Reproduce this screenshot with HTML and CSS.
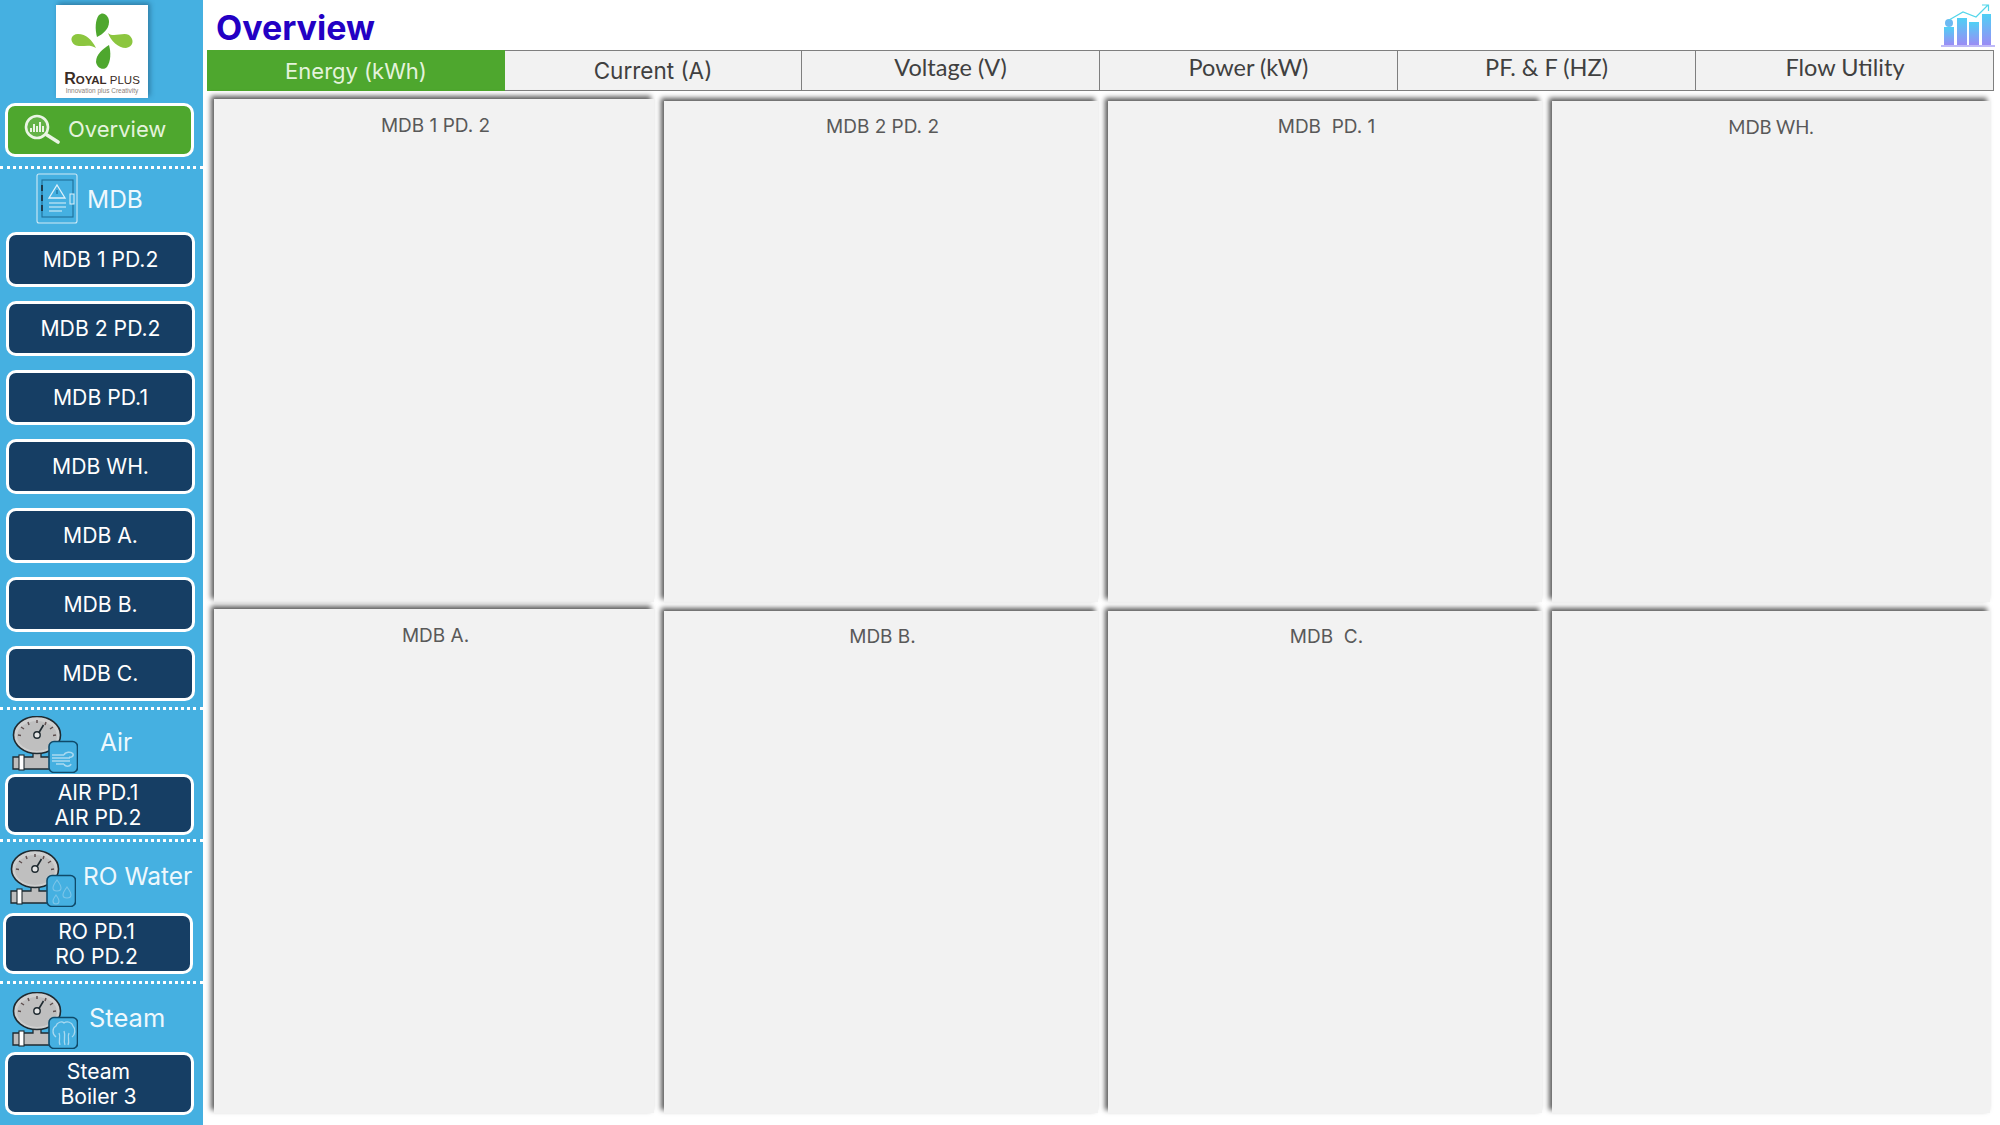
FILE: index.html
```html
<!DOCTYPE html>
<html lang="en">
<head>
<meta charset="utf-8">
<title>Overview</title>
<link rel="stylesheet" href="styles.css">
</head>
<body>
<svg class="defs" width="0" height="0" aria-hidden="true">
  <symbol id="gauge" viewBox="0 0 66 57">
    <path d="M21 35v6H1v12h40V41H29v-6z" fill="#bdbdbd" stroke="#1f2a30" stroke-width="1.300"/>
    <rect x="7" y="39" width="5" height="15" fill="#fff" stroke="#1f2a30" stroke-width="1.100"/>
    <ellipse cx="25" cy="19" rx="23.500" ry="18.500" fill="#cfcfcf" stroke="#1f2a30" stroke-width="1.600"/>
    <ellipse cx="25" cy="20" rx="20" ry="15" fill="#bfbfbf"/>
    <path d="M6 19l3 .5M9 11l3 2M16 6l1 3M25 4v3M34 6l-1 3M41 11l-3 2M44 19l-3 .5" stroke="#5f5050" stroke-width="1.500"/>
    <circle cx="25" cy="19" r="3.200" fill="#e4e4e4" stroke="#1f2a30" stroke-width="1.400"/>
    <path d="M27 16.500L31.500 9" stroke="#1f2a30" stroke-width="1.600"/>
    <rect x="37" y="25.500" width="28.500" height="31" rx="5" fill="#45b0e1" stroke="#0f4a6a" stroke-width="1.600"/>
  </symbol>
</svg>
<div class="app">
  <aside class="sidebar">
    <div class="brand">
      <div class="logo">
        <svg class="logo-mark" viewBox="66 10 70 62">
          <path d="M96 37C94 30 94 20 98 15c4-4 10 0 10 7 0 7-6 12-12 15z" fill="#4ea72e"/>
          <path d="M108 45c2 7 2 16-2 22-4 4-10 1-11-5 0-8 7-13 13-17z" fill="#4ea72e"/>
          <path d="M95 48c-7-5-15 0-21-3-6-4-4-11 3-11 8 0 14 6 18 14z" fill="#8cc63f"/>
          <path d="M107 33c5 5 15-1 21 2 6 5 4 12-3 13-8 0-15-7-18-15z" fill="#8cc63f"/>
        </svg>
        <div class="logo-name"><span class="logo-r">R</span><span class="logo-oyal">OYAL</span> PLUS</div>
        <div class="logo-tag">Innovation plus Creativity</div>
      </div>
    </div>
    <a class="btn btn-green">
      <svg class="ov-icon" viewBox="0 0 40 30">
        <circle cx="14" cy="13" r="11" fill="#63b247" stroke="#eaf5e4" stroke-width="2.600"/>
        <path d="M8 18v-4M11 18v-8M14 18v-6M17 18V8M20 18v-6" stroke="#eaf5e4" stroke-width="2"/>
        <path d="M24 21l11 7" stroke="#eaf5e4" stroke-width="3.600" stroke-linecap="round"/>
      </svg>
      Overview
    </a>
    <div class="dots dots-first"></div>
    <div class="head head-mdb">
      <svg class="mdb-icon" viewBox="0 0 42 51">
        <rect x="1" y="1" width="40" height="49" rx="2" fill="none" stroke="#cfe9f6" stroke-width="1.100"/>
        <rect x="6" y="7" width="31" height="37" fill="none" stroke="#1f6f99" stroke-width="1.100"/>
        <path d="M6 12v6M6 22v6M6 32v6" stroke="#1f3b4d" stroke-width="2"/>
        <path d="M21 12l8 13H13z" fill="none" stroke="#dff1fa" stroke-width="1.300"/>
        <path d="M21 17v4" stroke="#1f6f99" stroke-width="1.300"/>
        <path d="M13 30h17M13 34h17M13 38h13" stroke="#dff1fa" stroke-width="1.200"/>
        <rect x="34" y="21" width="4" height="10" fill="#45b0e1" stroke="#dff1fa" stroke-width="1"/>
      </svg>
      <span class="head-text">MDB</span>
    </div>
    <div class="stack">
      <a class="btn btn-navy btn-one">MDB 1 PD.2</a>
      <a class="btn btn-navy btn-one">MDB 2 PD.2</a>
      <a class="btn btn-navy btn-one">MDB PD.1</a>
      <a class="btn btn-navy btn-one">MDB WH.</a>
      <a class="btn btn-navy btn-one">MDB A.</a>
      <a class="btn btn-navy btn-one">MDB B.</a>
      <a class="btn btn-navy btn-one">MDB C.</a>
    </div>
    <div class="dots dots-air"></div>
    <div class="head head-air">
      <span class="gauge">
        <svg class="gauge-svg" viewBox="0 0 66 57"><use href="#gauge"/>
          <path d="M40 39h12M40 42h18M40 45h18M44 48h8M52 39c1-3 7-4 9-1 1 2-2 4-4 3M52 48c1 3 6 3 7 0" fill="none" stroke="#a9d9f0" stroke-width="1.500"/>
        </svg>
      </span>
      <span class="head-text head-text-air">Air</span>
    </div>
    <a class="btn btn-navy btn-two">AIR PD.1<br>AIR PD.2</a>
    <div class="dots dots-small"></div>
    <div class="head head-ro">
      <span class="gauge">
        <svg class="gauge-svg" viewBox="0 0 66 57"><use href="#gauge"/>
          <path d="M47 30c-3 4-4 6-4 8s2 3 4 3 4-1 4-3-1-4-4-8zM57 37c-3 4-4 6-4 8s2 3 4 3 4-1 4-3-1-4-4-8zM46 45c-2 3-3 4-3 6s1 3 3 3 3-1 3-3-1-3-3-6z" fill="none" stroke="#7cc5e8" stroke-width="1.100"/>
        </svg>
      </span>
      <span class="head-text head-text-ro">RO Water</span>
    </div>
    <a class="btn btn-navy btn-two btn-ro">RO PD.1<br>RO PD.2</a>
    <div class="dots dots-ro"></div>
    <div class="head head-steam">
      <span class="gauge">
        <svg class="gauge-svg" viewBox="0 0 66 57"><use href="#gauge"/>
          <path d="M44 45c-4-3-4-9 0-11 1-4 6-5 8-3 3-2 8-1 9 3 3 3 2 9-1 11M47 41c2 4-1 8 1 12M52 39c2 5-1 9 1 14M57 41c-2 4 1 8-1 12" fill="none" stroke="#a9d9f0" stroke-width="1.300"/>
        </svg>
      </span>
      <span class="head-text head-text-steam">Steam</span>
    </div>
    <a class="btn btn-navy btn-two btn-steam">Steam<br>Boiler 3</a>
  </aside>
  <main class="main">
    <header class="topbar">
      <h1 class="title">Overview</h1>
      <svg class="chart-icon" viewBox="0 0 54 44">
        <defs>
          <linearGradient id="barfill" x1="0" y1="0" x2="0" y2="1">
            <stop offset="0" stop-color="#4fd0f5"/>
            <stop offset="1" stop-color="#9a8cf5"/>
          </linearGradient>
        </defs>
        <circle cx="8" cy="20" r="4" fill="#6cb9f2"/>
        <rect x="3" y="24" width="10" height="18" fill="url(#barfill)"/>
        <rect x="16" y="15" width="10" height="27" fill="url(#barfill)"/>
        <rect x="28" y="19" width="10" height="23" fill="url(#barfill)"/>
        <rect x="41" y="11" width="9" height="31" fill="url(#barfill)"/>
        <path d="M0 43h54" stroke="#a9a2f5" stroke-width="1.600"/>
        <path d="M8 17L22 9l13 5L47 2M41 2h6.500v6" fill="none" stroke="#53d6ea" stroke-width="1.200"/>
      </svg>
    </header>
    <nav class="tabs">
      <div class="tab tab-active">Energy (kWh)</div>
      <div class="tab tab-low">Current (A)</div>
      <div class="tab tab-lato">Voltage (V)</div>
      <div class="tab tab-lato">Power (kW)</div>
      <div class="tab tab-lato">PF. &amp; F (HZ)</div>
      <div class="tab tab-lato">Flow Utility</div>
    </nav>
    <section class="board">
      <div class="panel panel-first">MDB 1 PD. 2</div>
      <div class="panel">MDB 2 PD. 2</div>
      <div class="panel">MDB&nbsp; PD. 1</div>
      <div class="panel panel-lato">MDB WH.</div>
      <div class="panel panel-first">MDB A.</div>
      <div class="panel">MDB B.</div>
      <div class="panel">MDB&nbsp; C.</div>
      <div class="panel panel-lato"></div>
    </section>
  </main>
</div>
</body>
</html>
```
FILE: styles.css
```css
* { box-sizing: border-box; }
html, body { margin: 0; padding: 0; background: #fff; }
body { width: 2000px; height: 1125px; overflow: hidden; font-family: "Inter", "Noto Sans", sans-serif; }
.defs { display: block; height: 0; }
.app { display: flex; width: 2000px; height: 1125px; }

/* sidebar */
.sidebar { width: 203px; height: 1125px; flex: none; background: #45b0e1; color: #fff; display: flex; flex-direction: column; }
.brand { height: 103px; padding: 5px 0 0 56px; flex: none; }
.logo { width: 92px; height: 93px; background: #fff; box-shadow: 2px -2px 5px rgba(20,60,90,.45); display: flex; flex-direction: column; align-items: center; color: #3a2c26; }
.logo-mark { width: 70px; height: 62px; margin-top: 5px; flex: none; }
.logo-name { font-family: "Liberation Sans", sans-serif; font-size: 11.500px; line-height: 14px; white-space: nowrap; }
.logo-r { font-size: 16px; font-weight: 700; }
.logo-oyal { font-weight: 700; }
.logo-tag { font-family: "Liberation Sans", sans-serif; font-size: 6.500px; line-height: 8px; color: #8a7f78; white-space: nowrap; }

.btn { display: flex; align-items: center; justify-content: center; text-align: center; border: 3px solid #fff; border-radius: 10px; flex: none; color: #fff; font-size: 21.200px; }
.btn-green { width: 189px; height: 54px; margin-left: 5px; background: #4ea72e; font-size: 22px; color: #e4f3dc; gap: 5px; justify-content: flex-start; padding: 0 0 2px 15px; }
.ov-icon { width: 40px; height: 30px; flex: none; }
.btn-navy { width: 189px; height: 55px; margin-left: 6px; background: #163e64; }
.btn-one { padding-bottom: 2px; }
.btn-two { height: 61px; margin-left: 5px; line-height: 25px; padding-right: 3px; }
.btn-ro { margin-left: 3px; width: 190px; }
.btn-steam { height: 63px; padding-right: 2px; }

.dots { height: 3px; flex: none; border-top: 3px dotted #fff; }
.dots-first { margin-top: 9px; }
.dots-air { margin-top: 6px; }
.dots-small { margin-top: 4px; }
.dots-ro { margin-top: 7px; }

.head { display: flex; align-items: center; flex: none; }
.head-text { font-size: 24.500px; color: #eef8fd; white-space: nowrap; }
.head-mdb { height: 63px; padding: 4px 0 8px 36px; gap: 9px; }
.mdb-icon { width: 42px; height: 51px; flex: none; }
.head-air { height: 64px; padding-left: 12px; }
.head-ro { height: 71px; padding-left: 10px; }
.head-steam { height: 68px; padding-left: 12px; }
.gauge { display: block; width: 66px; height: 57px; flex: none; }
.head-air .gauge, .head-steam .gauge { margin-top: 4px; }
.head-ro .gauge { margin-top: 1px; }
.gauge-svg { display: block; width: 66px; height: 57px; }
.head-text-air { margin-left: 22px; }
.head-text-ro { margin: 0 0 4px 7px; }
.head-text-steam { margin: 0 0 2px 11px; font-size: 25.500px; }

.stack { display: flex; flex-direction: column; gap: 14px; flex: none; }

/* main */
.main { flex: 1; min-width: 0; padding-left: 4px; display: flex; flex-direction: column; }
.topbar { height: 50px; flex: none; display: flex; align-items: flex-start; justify-content: space-between; padding: 0 5px 0 9px; }
.title { margin: 5px 0 0; font-size: 34px; line-height: 46px; font-weight: 700; color: #2300c4; }
.chart-icon { width: 54px; height: 44px; margin-top: 3px; }

.tabs { display: grid; grid-template-columns: 298px 297px 298px 298px 298px 298px; height: 41px; flex: none; width: 1787px; background: #f2f2f2; border: 1px solid #7f7f7f; border-left: 0; }
.tab { display: flex; align-items: center; justify-content: center; font-size: 22.500px; color: #404040; border-right: 1px solid #7f7f7f; padding-bottom: 2px; }
.tab:last-child { border-right: 0; }
.tab-active { background: #4ea72e; color: #e4f3dc; margin: -1px 0; border-right: 0; font-size: 22px; padding-bottom: 0; }
.tab-low { padding-bottom: 0; }
.tab-lato { font-family: "Lato", sans-serif; font-size: 23.500px; padding-bottom: 8px; }

.board { display: grid; grid-template-columns: 440px 434px 434px 438px; column-gap: 10px; grid-template-rows: 501px 502px; row-gap: 9px; margin: 10px 0 0 7px; width: 1776px; }
.panel { background: #f2f2f2; box-shadow: -3px -3px 5px rgba(0,0,0,.65); padding: 13px 0 0 3px; text-align: center; font-size: 19px; color: #595959; line-height: 26px; }
.panel-first { margin-top: -2px; padding-top: 14px; }
.panel-lato { font-family: "Lato", sans-serif; padding-left: 0; font-size: 18.500px; }
```
